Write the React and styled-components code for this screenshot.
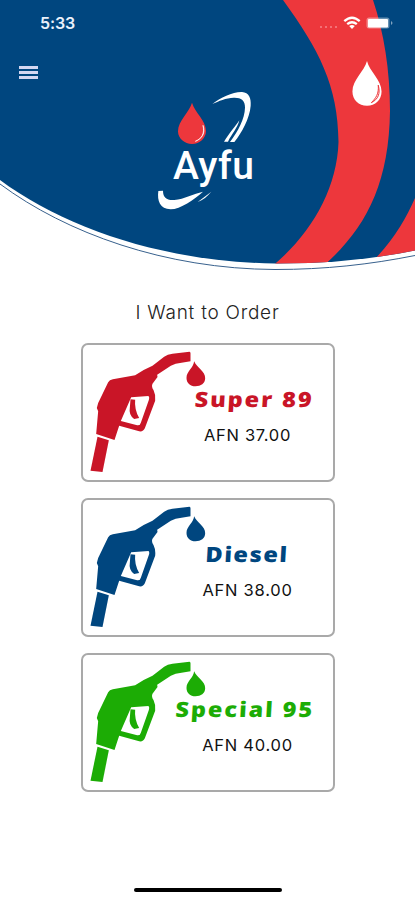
import styled, { createGlobalStyle } from 'styled-components';

const fuels = [
  { name: 'Super 89', price: 'AFN 37.00', color: '#c91527', spacing: 1.7, shift: 14, priceSpacing: 0.7 },
  { name: 'Diesel', price: 'AFN 38.00', color: '#00467f', spacing: 1.4, shift: -1, priceSpacing: 0.75 },
  { name: 'Special 95', price: 'AFN 40.00', color: '#1cac05', spacing: 1.7, shift: -6, priceSpacing: 0.75 },
];

const HeaderArt = () => (
  <Art viewBox='0 0 415 280' aria-hidden='true'>
    <defs>
      <clipPath id='dome'>
        <path d='M0 0H415V250.5C370 259.500 325 263.700 275 263.500C165 262 66 229 0 180Z' />
      </clipPath>
    </defs>
    <g clipPath='url(#dome)'>
      <rect width='415' height='280' fill='#00467f' />
      <path
        d='M283 0C319 50 338 85 338.500 142C337 190 310 236 270 268H321C364 231 389 187 390 111C390 70 384 33 373 0Z'
        fill='#ed373c'
      />
      <path d='M415 198C406 219 394 239 374 260H415Z' fill='#ed373c' />
    </g>
    <path
      d='M0 184C66 233 165 269 275 269.500C325 269.500 370 264.500 415 255.500'
      fill='none'
      stroke='#38618d'
      strokeWidth='1'
    />
  </Art>
);

const Logo = () => (
  <LogoBox>
    <LogoArt viewBox='0 0 360 390' aria-hidden='true'>
      <path d='M141 53C133 82 99 107 99 139C99 161 119 177 141 177C164 177 183 160 183 138C183 106 149 82 141 53Z' fill='#ed373c' />
      <path d='M174 121C179 145 172 160 151 169C170 162 183 144 174 121Z' fill='#fff' stroke='#fff' strokeWidth='2' />
      <path d='M202 57C226 38 264 20 291 21C312 23 319 39 317 62C314 101 290 143 268 171H255C280 137 299 101 300 68C301 45 287 37 266 38C243 39 221 48 202 57Z' fill='#fff' />
      <path d='M283 106C272 123 253 144 237 170H249C260 148 278 128 283 106Z' fill='#fff' />
      <path d='M40 318L54 317C54 338 66 347 88 345C118 342 146 326 174 320C148 344 106 372 77 373C45 372 36 347 40 318Z' fill='#fff' />
      <path d='M199 320L158 351C174 345 187 334 199 320Z' fill='#fff' />
    </LogoArt>
    <LogoText>Ayfu</LogoText>
  </LogoBox>
);

const Nozzle = ({ color }) => (
  <NozzleArt viewBox='45 48 350 366' fill={color} aria-hidden='true'>
    <path
      fillRule='evenodd'
      d='M343 50Q346 50 346 55V79L319 83Q300 84 287 92L246 119L247 126L232 146Q228 155 235 165Q242 179 240 197L209 280Q204 291 192 289L132 272L118 315L63 297L69 229L65 219L69 204L99 142Q103 135 113 133L180 121Q205 103 232 92L267 65Q277 58 292 56ZM168 187L220 183Q224 187 221 195L197 263Q195 272 186 271L137 258Z'
    />
    <path d='M166 193L180 194Q177 222 192 249L177 252Q160 239 164 218Z' />
    <path d='M67 305L101 316L82 411L46 407Z' />
    <path d='M357 79C364 97 391 110 390 130C390 146 377 154 361 154C345 154 334 144 334 129C334 109 355 99 357 79Z' />
  </NozzleArt>
);

const FuelCard = ({ fuel }) => (
  <Card>
    <Nozzle color={fuel.color} />
    <Details>
      <FuelName $color={fuel.color} $spacing={fuel.spacing} $shift={fuel.shift}>
        {fuel.name}
      </FuelName>
      <Price $spacing={fuel.priceSpacing}>{fuel.price}</Price>
    </Details>
  </Card>
);

const App = () => {
  return (
    <>
      <GlobalStyle />
      <Screen>
        <Header>
          <HeaderArt />
          <HeaderContent>
            <StatusBar>
              <Time>5:33</Time>
              <StatusIcons viewBox='0 0 78 18' aria-hidden='true'>
                <g fill='#f58488'>
                  <circle cx='5' cy='13' r='1' />
                  <circle cx='10' cy='13' r='1' />
                  <circle cx='15' cy='13' r='1' />
                  <circle cx='20' cy='13' r='1' />
                </g>
                <g fill='none' stroke='#fff' strokeWidth='2.300'>
                  <path d='M28.300 7.200Q36 0.300 43.700 7.200' />
                  <path d='M31.200 10.200Q36 6.200 40.800 10.200' />
                </g>
                <path d='M33.200 12Q36 9.900 38.800 12L36 15Z' fill='#fff' />
                <rect x='50.500' y='3.500' width='23' height='11' rx='2.500' fill='#fff' opacity='0.4' />
                <rect x='52' y='5' width='20' height='8.500' rx='1' fill='#fff' />
                <path d='M75 7Q78 9 75 11Z' fill='#fff' opacity='0.500' />
              </StatusIcons>
            </StatusBar>
            <Toolbar>
              <MenuButton aria-label='Menu'>
                <MenuLine />
                <MenuLine />
                <MenuLine />
              </MenuButton>
              <DropIcon viewBox='0 0 90 136' aria-hidden='true'>
                <path d='M45 0C37 31 1 57 1 92C1 118 20 135 45 135C70 135 89 117 89 92C89 57 52 31 45 0Z' fill='#fff' />
                <path d='M79 73C86 98 79 116 58 126C73 111 81 99 79 73Z' fill='none' stroke='#ed373c' strokeWidth='3' />
              </DropIcon>
            </Toolbar>
            <Logo />
          </HeaderContent>
        </Header>
        <Title>I Want to Order</Title>
        <CardList>
          {fuels.map((fuel) => (
            <FuelCard key={fuel.name} fuel={fuel} />
          ))}
        </CardList>
        <HomeBar />
      </Screen>
    </>
  );
};

const GlobalStyle = createGlobalStyle`
  * {
    box-sizing: border-box;
  }

  body {
    margin: 0;
    background: #fff;
    font-family: Inter, 'Liberation Sans', sans-serif;
  }
`;

const Screen = styled.main`
  display: flex;
  flex-direction: column;
  align-items: center;
  width: 415px;
  height: 900px;
  overflow: hidden;
`;

const Header = styled.header`
  display: grid;
  flex-shrink: 0;
  width: 415px;
  height: 280px;
`;

const Art = styled.svg`
  grid-area: 1 / 1;
  width: 415px;
  height: 280px;
`;

const HeaderContent = styled.div`
  grid-area: 1 / 1;
  z-index: 1;
  display: flex;
  flex-direction: column;
  align-items: stretch;
`;

const StatusBar = styled.div`
  display: flex;
  justify-content: space-between;
  align-items: center;
  height: 46px;
  padding: 0 21px 0 40px;
`;

const Time = styled.span`
  font-size: 16px;
  font-weight: 600;
  letter-spacing: -0.1px;
  color: #eaf1fb;
`;

const StatusIcons = styled.svg`
  width: 78px;
  height: 18px;
`;

const Toolbar = styled.div`
  display: flex;
  justify-content: space-between;
  height: 46px;
  padding: 15px 33px 0 19px;
`;

const MenuButton = styled.button`
  display: flex;
  flex-direction: column;
  gap: 2px;
  width: 19px;
  height: 14px;
  margin-top: 5px;
  padding: 0;
  border: 0;
  background: none;
`;

const MenuLine = styled.span`
  width: 19px;
  height: 3px;
  flex-shrink: 0;
  background: #d3d7f2;
`;

const DropIcon = styled.svg`
  width: 30px;
  height: 45px;
  flex-shrink: 0;
`;

const LogoBox = styled.div`
  display: grid;
  width: 120px;
  height: 130px;
  margin: -7px 0 0 145px;
`;

const LogoArt = styled.svg`
  grid-area: 1 / 1;
  width: 120px;
  height: 130px;
`;

const LogoText = styled.span`
  grid-area: 1 / 1;
  margin: 58px 0 0 28px;
  font-family: Roboto, sans-serif;
  font-size: 39px;
  font-weight: 500;
  line-height: 46px;
  letter-spacing: 0.4px;
  color: #fff;
`;

const Title = styled.h1`
  margin: 21px 0 18px;
  font-size: 19px;
  font-weight: 300;
  line-height: 24px;
  letter-spacing: 0.75px;
  color: #222;
`;

const CardList = styled.div`
  display: flex;
  flex-direction: column;
  gap: 16px;
`;

const Card = styled.div`
  display: grid;
  width: 254px;
  height: 139px;
  padding: 6px 7px;
  border: 2px solid #a9a9a9;
  border-radius: 7px;
  background: #fff;
`;

const NozzleArt = styled.svg`
  grid-area: 1 / 1;
  width: 117px;
  height: 122px;
`;

const Details = styled.div`
  grid-area: 1 / 1;
  display: flex;
  flex-direction: column;
  align-items: center;
  width: 154px;
  margin-left: 81px;
  padding-top: 35px;
`;

const FuelName = styled.span`
  margin-left: ${(props) => props.$shift}px;
  font-family: 'Open Sans', sans-serif;
  font-size: 21px;
  font-weight: 800;
  line-height: 26px;
  letter-spacing: ${(props) => props.$spacing}px;
  white-space: nowrap;
  color: ${(props) => props.$color};
  transform: scaleX(1.12) skewX(-3deg);
`;

const Price = styled.span`
  margin-top: 13px;
  font-size: 16.5px;
  line-height: 20px;
  letter-spacing: ${(props) => props.$spacing}px;
  color: #111;
`;

const HomeBar = styled.div`
  width: 148px;
  height: 4px;
  margin-top: auto;
  margin-bottom: 8px;
  border-radius: 2px;
  background: #000;
`;

export default App;
